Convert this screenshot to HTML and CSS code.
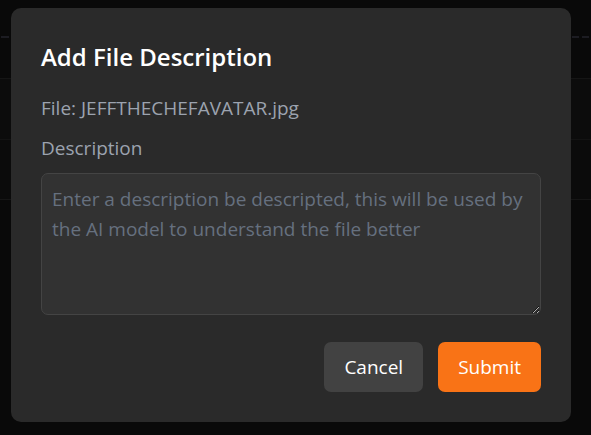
FILE: index.html
```html
<!DOCTYPE html>
<html lang="en">
<head>
<meta charset="utf-8">
<title>Add File Description</title>
<link rel="stylesheet" href="styles.css">
</head>
<body>
<div class="page">
  <header class="page-header">
    <div class="dash"></div>
  </header>
  <div class="page-row row-a"></div>
  <div class="page-row row-b"></div>
</div>

<div class="overlay">
  <div class="modal" role="dialog" aria-labelledby="modal-title">
    <h2 class="modal-title" id="modal-title">Add File Description</h2>
    <p class="file-name">File: JEFFTHECHEFAVATAR.jpg</p>
    <label class="field-label" for="desc">Description</label>
    <textarea id="desc" class="field-input" rows="4" placeholder="Enter a description be descripted, this will be used by&#10;the AI model to understand the file better"></textarea>
    <div class="actions">
      <button class="btn btn-cancel" type="button">Cancel</button>
      <button class="btn btn-submit" type="button">Submit</button>
    </div>
  </div>
</div>
</body>
</html>
```
FILE: styles.css
```css
* {
  box-sizing: border-box;
}

html, body {
  margin: 0;
  padding: 0;
  height: 100%;
}

body {
  background: #090909;
  font-family: "Open Sans", "Noto Sans", sans-serif;
  overflow: hidden;
}

/* dimmed page behind the dialog */
.page-header {
  height: 79px;
  padding-top: 36px;
  border-bottom: 1px solid #151515;
}

.dash {
  height: 2px;
  background: repeating-linear-gradient(90deg, #1c1c22 0 7px, transparent 7px 10px);
  background-position: 2px 0;
}

.page-row {
  border-bottom: 1px solid #131313;
}

.row-a {
  height: 61px;
  background: #0c0c0c;
}

.row-b {
  height: 60px;
  background: #0b0b0b;
  border-bottom-color: #161616;
}

/* dialog */
.overlay {
  position: fixed;
  inset: 0;
  display: flex;
  align-items: flex-start;
  justify-content: flex-start;
  padding: 8px 0 0 11px;
}

.modal {
  width: 560px;
  background: #2a2a2a;
  border-radius: 10px;
  padding: 30px;
  display: flex;
  flex-direction: column;
}

.modal-title {
  margin: 0 0 17px;
  font-size: 24px;
  line-height: 38px;
  font-weight: 600;
  color: #ffffff;
}

.file-name {
  margin: 0;
  font-size: 19px;
  line-height: 30px;
  color: #9ca3af;
}

.field-label {
  margin-top: 10px;
  font-size: 19px;
  line-height: 30px;
  color: #9ca3af;
}

.field-input {
  display: block;
  margin-top: 10px;
  width: 100%;
  height: 142px;
  padding: 10px;
  background: #323232;
  border: 1px solid #444444;
  border-radius: 7px;
  color: #e5e7eb;
  font-family: inherit;
  font-size: 19px;
  line-height: 30px;
  outline: none;
}

.field-input::placeholder {
  color: #66707f;
}

.actions {
  margin-top: 27px;
  display: flex;
  justify-content: flex-end;
  gap: 15px;
}

.btn {
  height: 50px;
  padding: 0 20px;
  border: none;
  border-radius: 7px;
  font-family: inherit;
  font-size: 19px;
  line-height: 30px;
  color: #ffffff;
  cursor: pointer;
}

.btn-cancel {
  background: #424242;
}

.btn-submit {
  background: #f97316;
}
```
